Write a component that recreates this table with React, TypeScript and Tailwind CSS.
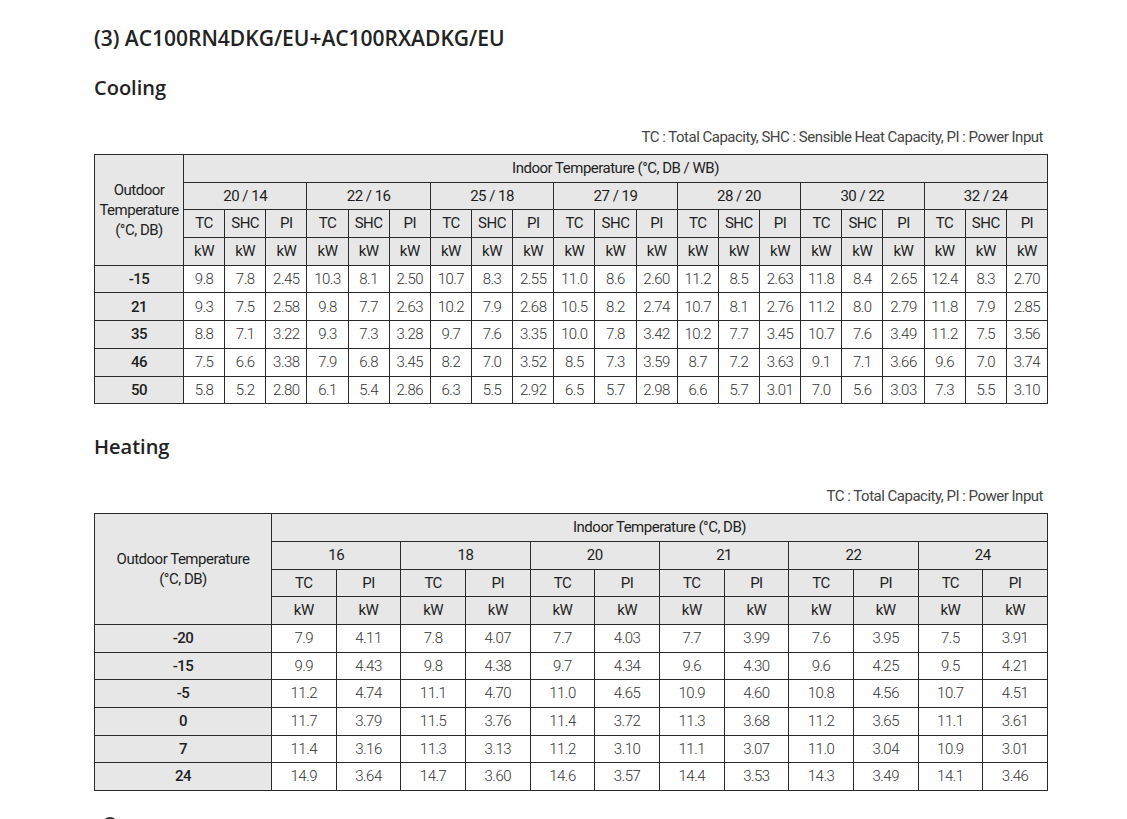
import React from 'react';

const cellFont = { fontFamily: 'Roboto, "Liberation Sans", sans-serif' };

const coolingTemps = ['20 / 14', '22 / 16', '25 / 18', '27 / 19', '28 / 20', '30 / 22', '32 / 24'];

const coolingRows: [string, string[]][] = [
  ['-15', ['9.8', '7.8', '2.45', '10.3', '8.1', '2.50', '10.7', '8.3', '2.55', '11.0', '8.6', '2.60', '11.2', '8.5', '2.63', '11.8', '8.4', '2.65', '12.4', '8.3', '2.70']],
  ['21', ['9.3', '7.5', '2.58', '9.8', '7.7', '2.63', '10.2', '7.9', '2.68', '10.5', '8.2', '2.74', '10.7', '8.1', '2.76', '11.2', '8.0', '2.79', '11.8', '7.9', '2.85']],
  ['35', ['8.8', '7.1', '3.22', '9.3', '7.3', '3.28', '9.7', '7.6', '3.35', '10.0', '7.8', '3.42', '10.2', '7.7', '3.45', '10.7', '7.6', '3.49', '11.2', '7.5', '3.56']],
  ['46', ['7.5', '6.6', '3.38', '7.9', '6.8', '3.45', '8.2', '7.0', '3.52', '8.5', '7.3', '3.59', '8.7', '7.2', '3.63', '9.1', '7.1', '3.66', '9.6', '7.0', '3.74']],
  ['50', ['5.8', '5.2', '2.80', '6.1', '5.4', '2.86', '6.3', '5.5', '2.92', '6.5', '5.7', '2.98', '6.6', '5.7', '3.01', '7.0', '5.6', '3.03', '7.3', '5.5', '3.10']],
];

const heatingTemps = ['16', '18', '20', '21', '22', '24'];

const heatingRows: [string, string[]][] = [
  ['-20', ['7.9', '4.11', '7.8', '4.07', '7.7', '4.03', '7.7', '3.99', '7.6', '3.95', '7.5', '3.91']],
  ['-15', ['9.9', '4.43', '9.8', '4.38', '9.7', '4.34', '9.6', '4.30', '9.6', '4.25', '9.5', '4.21']],
  ['-5', ['11.2', '4.74', '11.1', '4.70', '11.0', '4.65', '10.9', '4.60', '10.8', '4.56', '10.7', '4.51']],
  ['0', ['11.7', '3.79', '11.5', '3.76', '11.4', '3.72', '11.3', '3.68', '11.2', '3.65', '11.1', '3.61']],
  ['7', ['11.4', '3.16', '11.3', '3.13', '11.2', '3.10', '11.1', '3.07', '11.0', '3.04', '10.9', '3.01']],
  ['24', ['14.9', '3.64', '14.7', '3.60', '14.6', '3.57', '14.4', '3.53', '14.3', '3.49', '14.1', '3.46']],
];

const th = 'border border-[#2a2a2a] bg-[#e7e7e7] text-[#1e1e1e] font-normal text-center p-0';
const td = 'border border-[#2a2a2a] bg-white text-[#333] font-light text-center p-0';
const rowHead = 'border border-[#2a2a2a] bg-[#e7e7e7] text-[#1e1e1e] font-medium text-center p-0';

const CoolingTable = () => (
  <table className="w-[954px] border-collapse table-fixed text-[15px] tracking-[-0.5px]" style={cellFont}>
    <colgroup>
      <col className="w-[89px]" />
      {Array.from({ length: 21 }).map((_, i) => (
        <col key={i} />
      ))}
    </colgroup>
    <thead>
      <tr className="h-[27.7px]">
        <th rowSpan={4} className={th + ' leading-[20px]'}>
          Outdoor
          <br />
          Temperature
          <br />
          (°C, DB)
        </th>
        <th colSpan={21} className={th}>Indoor Temperature (°C, DB / WB)</th>
      </tr>
      <tr className="h-[27.7px]">
        {coolingTemps.map((t) => (
          <th key={t} colSpan={3} className={th}>{t}</th>
        ))}
      </tr>
      <tr className="h-[27.7px]">
        {coolingTemps.map((t) => (
          <React.Fragment key={t}>
            <th className={th}>TC</th>
            <th className={th}>SHC</th>
            <th className={th}>PI</th>
          </React.Fragment>
        ))}
      </tr>
      <tr className="h-[27.7px]">
        {Array.from({ length: 21 }).map((_, i) => (
          <th key={i} className={th}>kW</th>
        ))}
      </tr>
    </thead>
    <tbody>
      {coolingRows.map(([label, vals]) => (
        <tr key={label} className="h-[27.7px]">
          <td className={rowHead}>{label}</td>
          {vals.map((v, i) => (
            <td key={i} className={td}>{v}</td>
          ))}
        </tr>
      ))}
    </tbody>
  </table>
);

const HeatingTable = () => (
  <table className="w-[954px] border-collapse table-fixed text-[15px] tracking-[-0.5px]" style={cellFont}>
    <colgroup>
      <col className="w-[177px]" />
      {Array.from({ length: 12 }).map((_, i) => (
        <col key={i} />
      ))}
    </colgroup>
    <thead>
      <tr className="h-[27.7px]">
        <th rowSpan={4} className={th + ' leading-[20px]'}>
          Outdoor Temperature
          <br />
          (°C, DB)
        </th>
        <th colSpan={12} className={th}>Indoor Temperature (°C, DB)</th>
      </tr>
      <tr className="h-[27.7px]">
        {heatingTemps.map((t) => (
          <th key={t} colSpan={2} className={th}>{t}</th>
        ))}
      </tr>
      <tr className="h-[27.7px]">
        {heatingTemps.map((t) => (
          <React.Fragment key={t}>
            <th className={th}>TC</th>
            <th className={th}>PI</th>
          </React.Fragment>
        ))}
      </tr>
      <tr className="h-[27.7px]">
        {Array.from({ length: 12 }).map((_, i) => (
          <th key={i} className={th}>kW</th>
        ))}
      </tr>
    </thead>
    <tbody>
      {heatingRows.map(([label, vals]) => (
        <tr key={label} className="h-[27.7px]">
          <td className={rowHead}>{label}</td>
          {vals.map((v, i) => (
            <td key={i} className={td}>{v}</td>
          ))}
        </tr>
      ))}
    </tbody>
  </table>
);

const App = () => {
  return (
    <div className="w-[1127px] h-[819px] overflow-hidden bg-white pl-[94px]">
      <div className="w-[954px]">
        <h1
          className="pt-[24px] text-[21px] leading-[28px] font-semibold text-[#222]"
          style={{ fontFamily: '"Open Sans", sans-serif' }}
        >
          (3) AC100RN4DKG/EU+AC100RXADKG/EU
        </h1>
        <h2
          className="mt-[22px] text-[20px] leading-[28px] font-semibold text-[#222]"
          style={{ fontFamily: '"Open Sans", sans-serif' }}
        >
          Cooling
        </h2>
        <p className="mt-[25px] pr-[5px] text-right text-[15px] tracking-[-0.5px] leading-[20px] text-[#444]" style={cellFont}>
          TC : Total Capacity, SHC : Sensible Heat Capacity, PI : Power Input
        </p>
        <div className="mt-[7px]">
          <CoolingTable />
        </div>
        <h2
          className="mt-[29px] text-[20px] leading-[28px] font-semibold text-[#222]"
          style={{ fontFamily: '"Open Sans", sans-serif' }}
        >
          Heating
        </h2>
        <p className="mt-[25px] pr-[5px] text-right text-[15px] tracking-[-0.5px] leading-[20px] text-[#444]" style={cellFont}>
          TC : Total Capacity, PI : Power Input
        </p>
        <div className="mt-[7px]">
          <HeatingTable />
        </div>
        <div className="mt-[26px] ml-[8px] w-[16px] h-[16px] rounded-full border-2 border-[#333]" />
      </div>
    </div>
  );
};

export default App;
